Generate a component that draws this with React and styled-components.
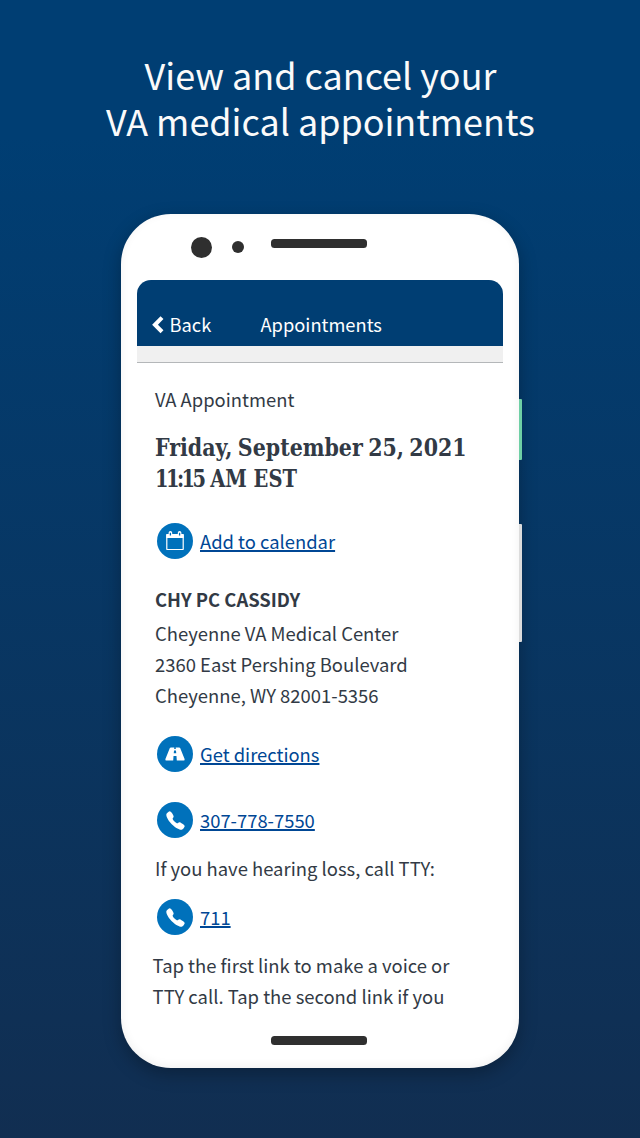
import React from "react";
import styled, { createGlobalStyle } from "styled-components";
import { IoCall } from "react-icons/io5";

const GlobalStyle = createGlobalStyle`
  *, *::before, *::after { box-sizing: border-box; }
  body { margin: 0; font-family: "Noto Sans CJK SC", sans-serif; }
  h1, h2, p { margin: 0; font-weight: 400; }
`;

const Page = styled.main`
  display: flex;
  flex-direction: column;
  align-items: center;
  width: 640px;
  height: 1138px;
  overflow: hidden;
  background: linear-gradient(180deg, #003e73 0%, #003e73 12%, #112e51 100%);
`;

const Headline = styled.h1`
  height: 214px;
  padding: 51px 0 0 1px;
  color: #fafafa;
  text-align: center;
`;

const HeadlineLine = styled.span`
  display: block;
  font-size: 35.95px;
  line-height: 46px;
  white-space: nowrap;
`;

const Phone = styled.section`
  position: relative;
  display: flex;
  flex-direction: column;
  width: 398px;
  height: 854px;
  padding: 0 16px;
  border-radius: 50px;
  background: #fff;
  box-shadow: 0 6px 18px rgba(0, 0, 0, 0.28), inset 0 -2px 10px rgba(0, 0, 0, 0.06);
`;

const SideButton = styled.span`
  position: absolute;
  left: 398px;
  top: ${(p) => p.$top}px;
  width: 3px;
  height: ${(p) => p.$height}px;
  border-radius: 0 1px 1px 0;
  background: ${(p) => p.$color};
`;

const Sensors = styled.div`
  display: flex;
  height: 66px;
  padding: 22.5px 0 0 54.4px;
`;

const Lens = styled.span`
  width: ${(p) => p.$size}px;
  height: ${(p) => p.$size}px;
  margin: ${(p) => p.$offset}px 19.8px 0 0;
  border-radius: 50%;
  background: #2f2f2f;
`;

const Bar = styled.span`
  width: 96px;
  height: 9px;
  border-radius: 3.5px;
  background: #2f2f2f;
`;

const SpeakerBar = styled(Bar)`
  margin: 2.5px 0 0 7px;
`;

const HomeBar = styled(Bar)`
  margin: 24px 0 0 134px;
`;

const NavBar = styled.header`
  display: grid;
  grid-template-columns: 108.5px 1fr;
  align-items: start;
  height: 66px;
  padding: 29px 0 0 15px;
  border-radius: 14px 14px 0 0;
  background: #003e73;
  color: #fff;
  font-size: 18.3px;
  line-height: 31px;
`;

const Back = styled.span`
  display: flex;
  align-items: center;
  gap: 5.5px;
  height: 31px;
`;

const Strip = styled.div`
  height: 17px;
  background: #f0f0f0;
  border-bottom: 1px solid #b4b7b9;
`;

const Content = styled.div`
  display: flex;
  flex-direction: column;
  padding: 21px 0 0 18px;
  color: #323a45;
`;

const Line = styled.p`
  font-size: ${(p) => p.$size || 18.46}px;
  line-height: 31px;
  font-weight: ${(p) => (p.$bold ? 700 : 400)};
  white-space: nowrap;
`;

const DateHeading = styled.h2`
  margin-top: 17px;
  font-family: "DejaVu Serif Condensed", "DejaVu Serif", serif;
  font-stretch: condensed;
  font-size: 24.3px;
  font-weight: 700;
  line-height: 31px;
`;

const DateLine = styled.span`
  display: block;
  width: max-content;
  transform: scaleX(${(p) => p.$squeeze});
  transform-origin: left;
  word-spacing: ${(p) => p.$wordGap || 0}px;
  white-space: nowrap;
`;

const Time = styled.span`
  letter-spacing: -2.9px;
`;

const Address = styled.div`
  margin: 3px 0 25px;
`;

const Note = styled.div`
  margin: 15px 0 0 -2.4px;
`;

const Action = styled.div`
  display: flex;
  align-items: center;
  gap: 7px;
  height: 36px;
  margin: ${(p) => p.$top || 0}px 0 ${(p) => p.$bottom || 0}px 2px;
`;

const Badge = styled.span`
  display: grid;
  place-items: center;
  width: 36px;
  height: 36px;
  border-radius: 50%;
  background: #0071bb;
  color: #fff;
`;

const Link = styled.a`
  color: #004795;
  font-size: 18.4px;
  line-height: 36px;
  text-decoration: underline;
  text-decoration-thickness: 1.5px;
  text-underline-offset: 1px;
  text-decoration-skip-ink: none;
`;

const ChevronIcon = () => (
  <svg width="12" height="18" viewBox="0 0 12 18" fill="none" stroke="currentColor">
    <path d="M10 1.6L3 8.7L10 15.8" strokeWidth="4.1" />
  </svg>
);

const CalendarIcon = () => (
  <svg width="20" height="20" viewBox="0 0 20 20" fill="none" stroke="currentColor">
    <rect x="1.8" y="3.6" width="16.4" height="14.9" rx="0.6" strokeWidth="1.2" />
    <path d="M1.3 3.2h17.4v3.8H1.3z" fill="currentColor" stroke="none" />
    <path d="M5.4 3.8V1.8M14.6 3.8V1.8" strokeWidth="3.6" strokeLinecap="round" />
    <path d="M5.4 4.4V1.8M14.6 4.4V1.8" stroke="#0071bb" strokeWidth="1.3" />
  </svg>
);

const RoadIcon = () => (
  <svg width="20" height="14" viewBox="0 0 19 14" preserveAspectRatio="none" fill="currentColor">
    <path d="M5.6 0.4H8.9L8.7 2.1H10.3L10.1 0.4H13.4Q14.1 0.4 14.4 1.1L18.6 12Q19 13.5 17.8 13.5H11.2L10.9 9H8.1L7.8 13.5H1.2Q0 13.5 0.4 12L4.6 1.1Q4.9 0.4 5.6 0.4ZM8.6 3.6L8.3 6.2H10.7L10.4 3.6Z" fillRule="evenodd" />
  </svg>
);

export default function App() {
  return (
    <>
      <GlobalStyle />
      <Page>
        <Headline>
          <HeadlineLine>View and cancel your</HeadlineLine>
          <HeadlineLine>VA medical appointments</HeadlineLine>
        </Headline>
        <Phone>
          <SideButton $top={185} $height={61} $color="#6fcfa5" />
          <SideButton $top={310} $height={118} $color="#dcdcdc" />
          <Sensors>
            <Lens $size={21} $offset={0} />
            <Lens $size={12} $offset={4.5} />
            <SpeakerBar />
          </Sensors>
          <NavBar>
            <Back><ChevronIcon />Back</Back>
            <span>Appointments</span>
          </NavBar>
          <Strip />
          <Content>
            <Line $size={18.4}>VA Appointment</Line>
            <DateHeading>
              <DateLine $squeeze={0.94} $wordGap={-1.8}>Friday, September 25, 2021</DateLine>
              <DateLine $squeeze={0.89}><Time>11:15</Time> AM EST</DateLine>
            </DateHeading>
            <Action $top={29} $bottom={25}>
              <Badge><CalendarIcon /></Badge>
              <Link>Add to calendar</Link>
            </Action>
            <Line $bold $size={18.4}>CHY PC CASSIDY</Line>
            <Address>
              <Line>Cheyenne VA Medical Center</Line>
              <Line>2360 East Pershing Boulevard</Line>
              <Line>Cheyenne, WY 82001-5356</Line>
            </Address>
            <Action $bottom={30}>
              <Badge><RoadIcon /></Badge>
              <Link>Get directions</Link>
            </Action>
            <Action $bottom={15}>
              <Badge><IoCall size={21} /></Badge>
              <Link>307-778-7550</Link>
            </Action>
            <Line>If you have hearing loss, call TTY:</Line>
            <Action $top={15}>
              <Badge><IoCall size={21} /></Badge>
              <Link>711</Link>
            </Action>
            <Note>
              <Line>Tap the first link to make a voice or</Line>
              <Line>TTY call. Tap the second link if you</Line>
            </Note>
          </Content>
          <HomeBar />
        </Phone>
      </Page>
    </>
  );
}
